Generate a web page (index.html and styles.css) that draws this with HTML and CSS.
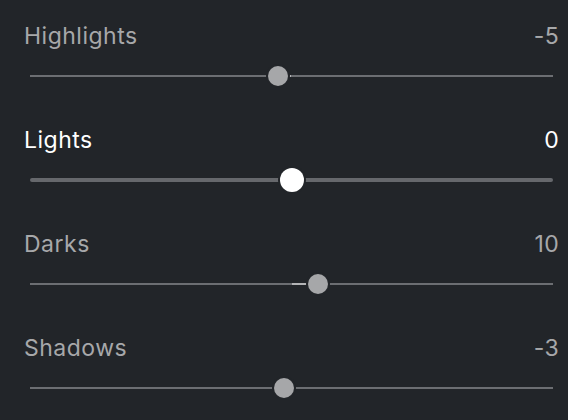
FILE: index.html
```html
<!DOCTYPE html>
<html>
<head>
<meta charset="utf-8">
<link rel="stylesheet" href="styles.css">
</head>
<body>
<div class="panel">
  <div class="row">
    <div class="head"><span class="label">Highlights</span><span class="value">-5</span></div>
    <div class="slider">
      <div class="track"></div>
      <div class="fill" style="left:47.4%;width:2.6%"></div>
      <div class="thumb" style="left:47.4%"></div>
    </div>
  </div>
  <div class="row active">
    <div class="head"><span class="label">Lights</span><span class="value">0</span></div>
    <div class="slider">
      <div class="track"></div>
      <div class="thumb" style="left:50%"></div>
    </div>
  </div>
  <div class="row">
    <div class="head"><span class="label">Darks</span><span class="value">10</span></div>
    <div class="slider">
      <div class="track"></div>
      <div class="fill" style="left:50%;width:5.07%"></div>
      <div class="thumb" style="left:55.07%"></div>
    </div>
  </div>
  <div class="row">
    <div class="head"><span class="label">Shadows</span><span class="value">-3</span></div>
    <div class="slider">
      <div class="track"></div>
      <div class="fill" style="left:48.57%;width:1.43%"></div>
      <div class="thumb" style="left:48.57%"></div>
    </div>
  </div>
</div>
</body>
</html>
```
FILE: styles.css
```css
html, body {
  margin: 0;
  padding: 0;
  background: #222529;
  height: 100%;
  overflow: hidden;
}
.panel {
  display: flex;
  flex-direction: column;
  gap: 39px;
  padding: 23px 10px 0 24px;
  font-family: Inter, "Noto Sans", sans-serif;
}
.row {
  display: flex;
  flex-direction: column;
}
.head {
  display: flex;
  justify-content: space-between;
  align-items: baseline;
  font-size: 23px;
  line-height: 26px;
  color: #a7a8aa;
}
.label {
  letter-spacing: 0.5px;
}
.value {
  letter-spacing: 0.3px;
  margin-right: -1px;
}
.active .head {
  color: #ffffff;
}
.slider {
  position: relative;
  height: 24px;
  margin: 15px 5px 0 6px;
}
.track {
  position: absolute;
  left: 0;
  right: 0;
  top: 11px;
  height: 2px;
  background: #6c6e72;
}
.active .track {
  top: 10px;
  height: 4px;
  border-radius: 2px;
  background: #66686c;
}
.fill {
  position: absolute;
  top: 11px;
  height: 2px;
  background: #b3b4b6;
}
.thumb {
  position: absolute;
  top: 2px;
  width: 20px;
  height: 20px;
  margin-left: -10px;
  border-radius: 50%;
  background: #a6a7a9;
  box-shadow: 0 0 0 2px #222529;
}
.active .thumb {
  top: 0;
  width: 24px;
  height: 24px;
  margin-left: -12px;
  background: #ffffff;
}
```
